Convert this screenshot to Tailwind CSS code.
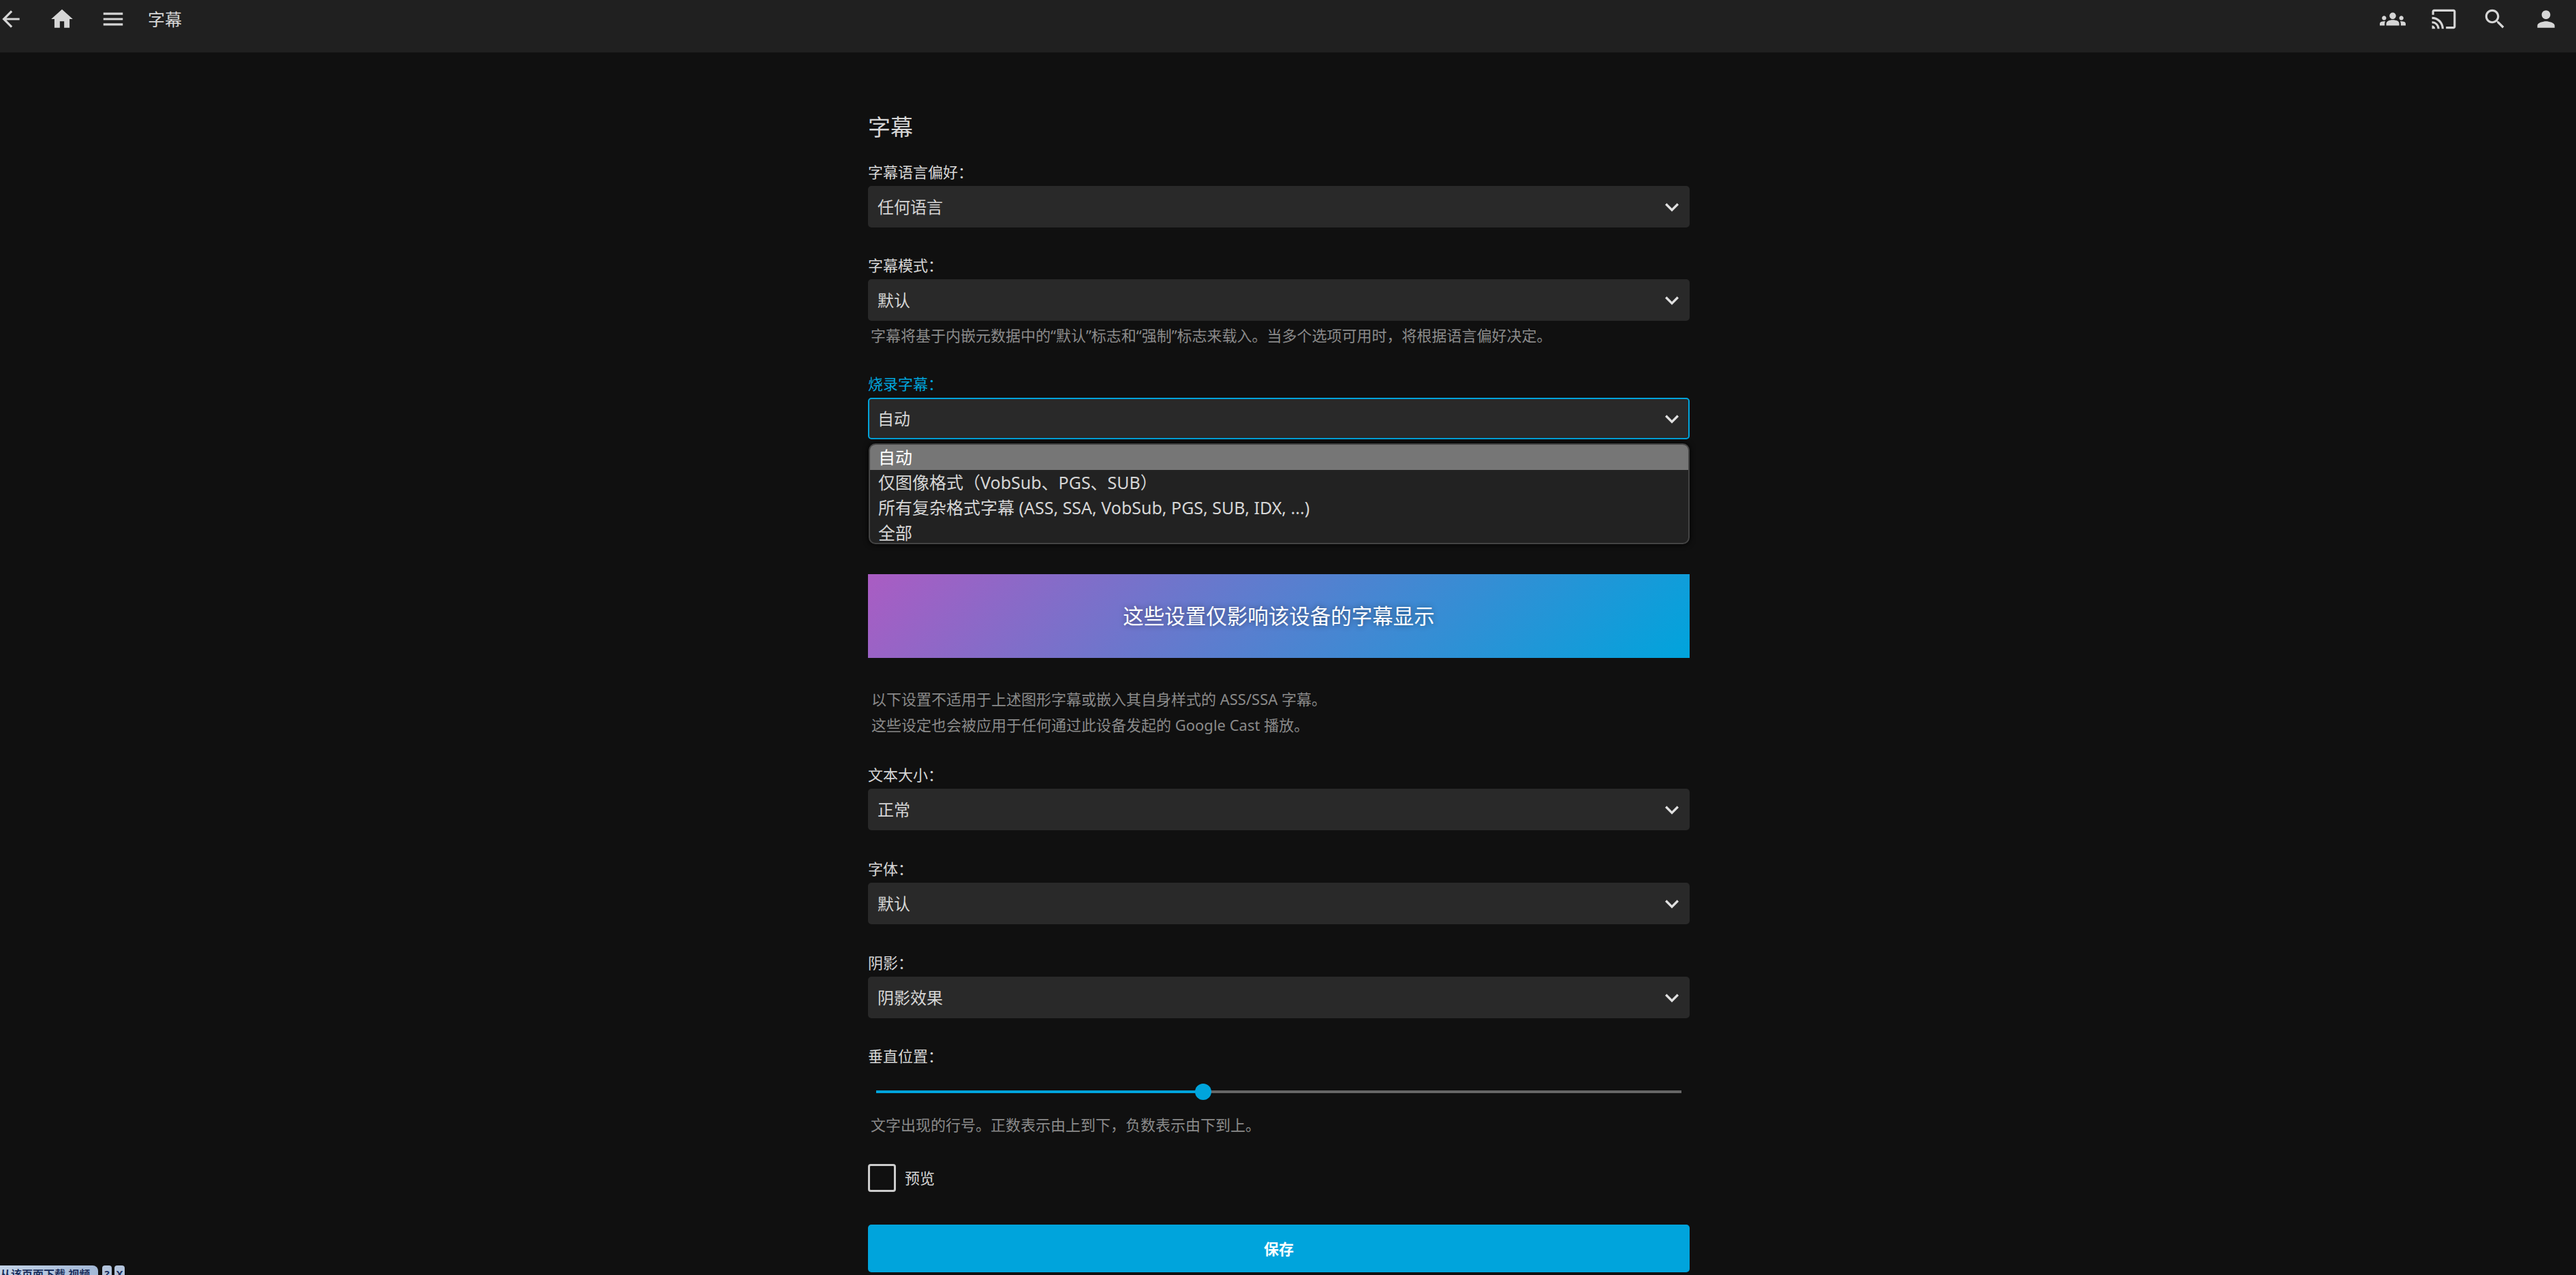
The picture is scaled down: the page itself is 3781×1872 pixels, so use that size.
<!DOCTYPE html>
<html lang="zh-CN">
<head>
    <meta charset="UTF-8">
    <title>字幕</title>
    <script src="https://cdn.jsdelivr.net/npm/@tailwindcss/browser@4"></script>
</head>
<body class="bg-[#101010] text-[#d6d6d6] h-[1872px] overflow-hidden relative font-['Noto_Sans','Noto_Sans_CJK_SC',sans-serif]">

    <!-- Top bar -->
    <header class="h-[77px] bg-[#202020] flex justify-between pt-[9px]">
        <div class="flex items-start gap-[37px] ml-[-3px]">
            <svg class="w-[38px] h-[38px]" viewBox="0 0 24 24" fill="#d6d6d6"><path d="M20 11H7.83l5.59-5.59L12 4l-8 8 8 8 1.41-1.41L7.83 13H20v-2z"/></svg>
            <svg class="w-[38px] h-[38px]" viewBox="0 0 24 24" fill="#d6d6d6"><path d="M10 20v-6h4v6h5v-8h3L12 3 2 12h3v8z"/></svg>
            <svg class="w-[38px] h-[38px]" viewBox="0 0 24 24" fill="#d6d6d6"><path d="M3 18h18v-2H3v2zm0-5h18v-2H3v2zm0-7v2h18V6H3z"/></svg>
            <h1 class="text-[25px] leading-[38px] ml-[-5px]">字幕</h1>
        </div>
        <div class="flex items-start gap-[37px] mr-[25px]">
            <svg class="w-[38px] h-[38px]" viewBox="0 0 24 24" fill="#d6d6d6"><path d="M12 12.75c1.63 0 3.07.39 4.24.9 1.08.48 1.76 1.56 1.76 2.73V18H6v-1.61c0-1.18.68-2.26 1.76-2.73 1.17-.52 2.61-.91 4.24-.91zM4 13c1.1 0 2-.9 2-2s-.9-2-2-2-2 .9-2 2 .9 2 2 2zm1.13 1.1C4.76 14.04 4.39 14 4 14c-.99 0-1.93.21-2.78.58C.48 14.9 0 15.62 0 16.43V18h4.5v-1.61c0-.83.23-1.61.63-2.29zM20 13c1.1 0 2-.9 2-2s-.9-2-2-2-2 .9-2 2 .9 2 2 2zm4 3.43c0-.81-.48-1.53-1.22-1.85-.85-.37-1.79-.58-2.78-.58-.39 0-.76.04-1.13.1.4.68.63 1.46.63 2.29V18H24v-1.57zM12 6c1.66 0 3 1.34 3 3s-1.34 3-3 3-3-1.34-3-3 1.34-3 3-3z"/></svg>
            <svg class="w-[38px] h-[38px]" viewBox="0 0 24 24" fill="#d6d6d6"><path d="M21 3H3c-1.1 0-2 .9-2 2v3h2V5h18v14h-7v2h7c1.1 0 2-.9 2-2V5c0-1.1-.9-2-2-2zM1 18v3h3c0-1.66-1.34-3-3-3zm0-4v2c2.76 0 5 2.24 5 5h2c0-3.87-3.13-7-7-7zm0-4v2c4.97 0 9 4.03 9 9h2c0-6.08-4.93-11-11-11z"/></svg>
            <svg class="w-[38px] h-[38px]" viewBox="0 0 24 24" fill="#d6d6d6"><path d="M15.5 14h-.79l-.28-.27C15.41 12.59 16 11.11 16 9.5 16 5.91 13.09 3 9.5 3S3 5.91 3 9.5 5.91 16 9.5 16c1.61 0 3.09-.59 4.23-1.57l.27.28v.79l5 4.99L20.49 19l-4.99-5zm-6 0C7.01 14 5 11.99 5 9.5S7.01 5 9.5 5 14 7.01 14 9.5 11.99 14 9.5 14z"/></svg>
            <svg class="w-[38px] h-[38px]" viewBox="0 0 24 24" fill="#d6d6d6"><path d="M12 12c2.21 0 4-1.79 4-4s-1.79-4-4-4-4 1.79-4 4 1.79 4 4 4zm0 2c-2.67 0-8 1.34-8 4v2h16v-2c0-2.66-5.33-4-8-4z"/></svg>
        </div>
    </header>

    <!-- Subtitle settings form -->
    <main class="w-[1206px] ml-[1274px] flex flex-col">
        <h2 class="text-[33px] leading-[46px] mt-[87px]">字幕</h2>

        <label class="text-[22px] leading-[30px] mt-[26px]">字幕语言偏好<span class="font-['Noto_Sans_CJK_JP']">：</span></label>
        <div class="h-[61px] mt-[6px] bg-[#292929] rounded-[5px] flex items-center justify-between pl-[14px] pr-[6px] text-[24px]">
            <span>任何语言</span>
            <svg class="w-[40px] h-[40px]" viewBox="0 0 24 24" fill="#e0e0e0"><path d="M7.41 8.59 12 13.17l4.59-4.58L18 10l-6 6-6-6z"/></svg>
        </div>

        <label class="text-[22px] leading-[30px] mt-[39px]">字幕模式<span class="font-['Noto_Sans_CJK_JP']">：</span></label>
        <div class="h-[61px] mt-[6px] bg-[#292929] rounded-[5px] flex items-center justify-between pl-[14px] pr-[6px] text-[24px]">
            <span>默认</span>
            <svg class="w-[40px] h-[40px]" viewBox="0 0 24 24" fill="#e0e0e0"><path d="M7.41 8.59 12 13.17l4.59-4.58L18 10l-6 6-6-6z"/></svg>
        </div>
        <p class="text-[22px] leading-[30px] mt-[6px] pl-[4px] text-[#8a8a8a]">字幕将基于内嵌元数据中的“默认”标志和“强制”标志来载入。当多个选项可用时，将根据语言偏好决定。</p>

        <label class="text-[22px] leading-[30px] mt-[40px] text-[#00a4dc]">烧录字幕<span class="font-['Noto_Sans_CJK_JP']">：</span></label>
        <div class="h-[61px] mt-[6px] bg-[#292929] rounded-[5px] border-2 border-[#00a4dc] flex items-center justify-between pl-[12px] pr-[4px] text-[24px]">
            <span>自动</span>
            <svg class="w-[40px] h-[40px]" viewBox="0 0 24 24" fill="#e0e0e0"><path d="M7.41 8.59 12 13.17l4.59-4.58L18 10l-6 6-6-6z"/></svg>
        </div>
        <div class="h-[148px] mt-[6px] ml-[1px] bg-[#222222] border-2 border-[#444444] rounded-[10px] overflow-hidden text-[25px] leading-[37px] shadow-[0_0_8px_#000]">
            <div class="bg-[#767676] text-white pl-[12px]">自动</div>
            <div class="pl-[12px]">仅图像格式（VobSub、PGS、SUB）</div>
            <div class="pl-[12px]">所有复杂格式字幕 (ASS, SSA, VobSub, PGS, SUB, IDX, ...)</div>
            <div class="pl-[12px]">全部</div>
        </div>

        <div class="h-[123px] mt-[44px] bg-linear-[135deg] from-[#aa5cc3] to-[#00a4dc] flex items-center justify-center text-white text-[30.5px] [text-shadow:0_0_8px_rgba(0,0,0,0.45)]">这些设置仅影响该设备的字幕显示</div>

        <p class="text-[22px] leading-[38px] mt-[41px] pl-[5px] text-[#8a8a8a]">以下设置不适用于上述图形字幕或嵌入其自身样式的 ASS/SSA 字幕。<br>这些设定也会被应用于任何通过此设备发起的 Google Cast 播放。</p>

        <label class="text-[22px] leading-[30px] mt-[38px]">文本大小<span class="font-['Noto_Sans_CJK_JP']">：</span></label>
        <div class="h-[61px] mt-[6px] bg-[#292929] rounded-[5px] flex items-center justify-between pl-[14px] pr-[6px] text-[24px]">
            <span>正常</span>
            <svg class="w-[40px] h-[40px]" viewBox="0 0 24 24" fill="#e0e0e0"><path d="M7.41 8.59 12 13.17l4.59-4.58L18 10l-6 6-6-6z"/></svg>
        </div>

        <label class="text-[22px] leading-[30px] mt-[40px]">字体<span class="font-['Noto_Sans_CJK_JP']">：</span></label>
        <div class="h-[61px] mt-[6px] bg-[#292929] rounded-[5px] flex items-center justify-between pl-[14px] pr-[6px] text-[24px]">
            <span>默认</span>
            <svg class="w-[40px] h-[40px]" viewBox="0 0 24 24" fill="#e0e0e0"><path d="M7.41 8.59 12 13.17l4.59-4.58L18 10l-6 6-6-6z"/></svg>
        </div>

        <label class="text-[22px] leading-[30px] mt-[40px]">阴影<span class="font-['Noto_Sans_CJK_JP']">：</span></label>
        <div class="h-[61px] mt-[6px] bg-[#292929] rounded-[5px] flex items-center justify-between pl-[14px] pr-[6px] text-[24px]">
            <span>阴影效果</span>
            <svg class="w-[40px] h-[40px]" viewBox="0 0 24 24" fill="#e0e0e0"><path d="M7.41 8.59 12 13.17l4.59-4.58L18 10l-6 6-6-6z"/></svg>
        </div>

        <label class="text-[22px] leading-[30px] mt-[39px]">垂直位置<span class="font-['Noto_Sans_CJK_JP']">：</span></label>
        <div class="relative h-[24px] mt-[26px] mx-[12px] flex items-center">
            <div class="h-[4px] w-[480px] bg-[#00a4dc]"></div>
            <div class="h-[4px] flex-1 bg-[#666666]"></div>
            <div class="absolute left-[468px] top-0 w-[24px] h-[24px] rounded-full bg-[#00a4dc]"></div>
        </div>
        <p class="text-[22px] leading-[30px] mt-[21px] pl-[4px] text-[#8a8a8a]">文字出现的行号。正数表示由上到下，负数表示由下到上。</p>

        <div class="flex items-center gap-[13px] mt-[43px]">
            <span class="w-[41px] h-[41px] border-[3px] border-[#cccccc] rounded-[4px]"></span>
            <span class="text-[22px]">预览</span>
        </div>

        <button class="h-[70px] mt-[48px] bg-[#00a4dc] rounded-[5px] text-white font-bold text-[22px]">保存</button>
    </main>

    <!-- Download panel peeking in at the bottom left corner -->
    <div class="absolute left-0 top-[1858px] w-[183px] h-[14px] overflow-hidden flex">
        <div class="w-[144px] h-[30px] bg-gradient-to-r from-[#c4d4e8] to-[#a3b8d6] rounded-tr-[8px] text-[#1c2f5c] font-bold text-[16px] leading-[26px] whitespace-nowrap overflow-hidden">从该页面下载 视频</div>
        <div class="w-[14px] h-[30px] ml-[6px] bg-[#b3c4dc] rounded-t-[4px] text-[#1c2f5c] font-bold text-[15px] leading-[24px] text-center">?</div>
        <div class="w-[15px] h-[30px] ml-[4px] bg-[#b3c4dc] rounded-t-[4px] text-[#1c2f5c] font-bold text-[15px] leading-[24px] text-center">X</div>
    </div>
</body>
</html>
